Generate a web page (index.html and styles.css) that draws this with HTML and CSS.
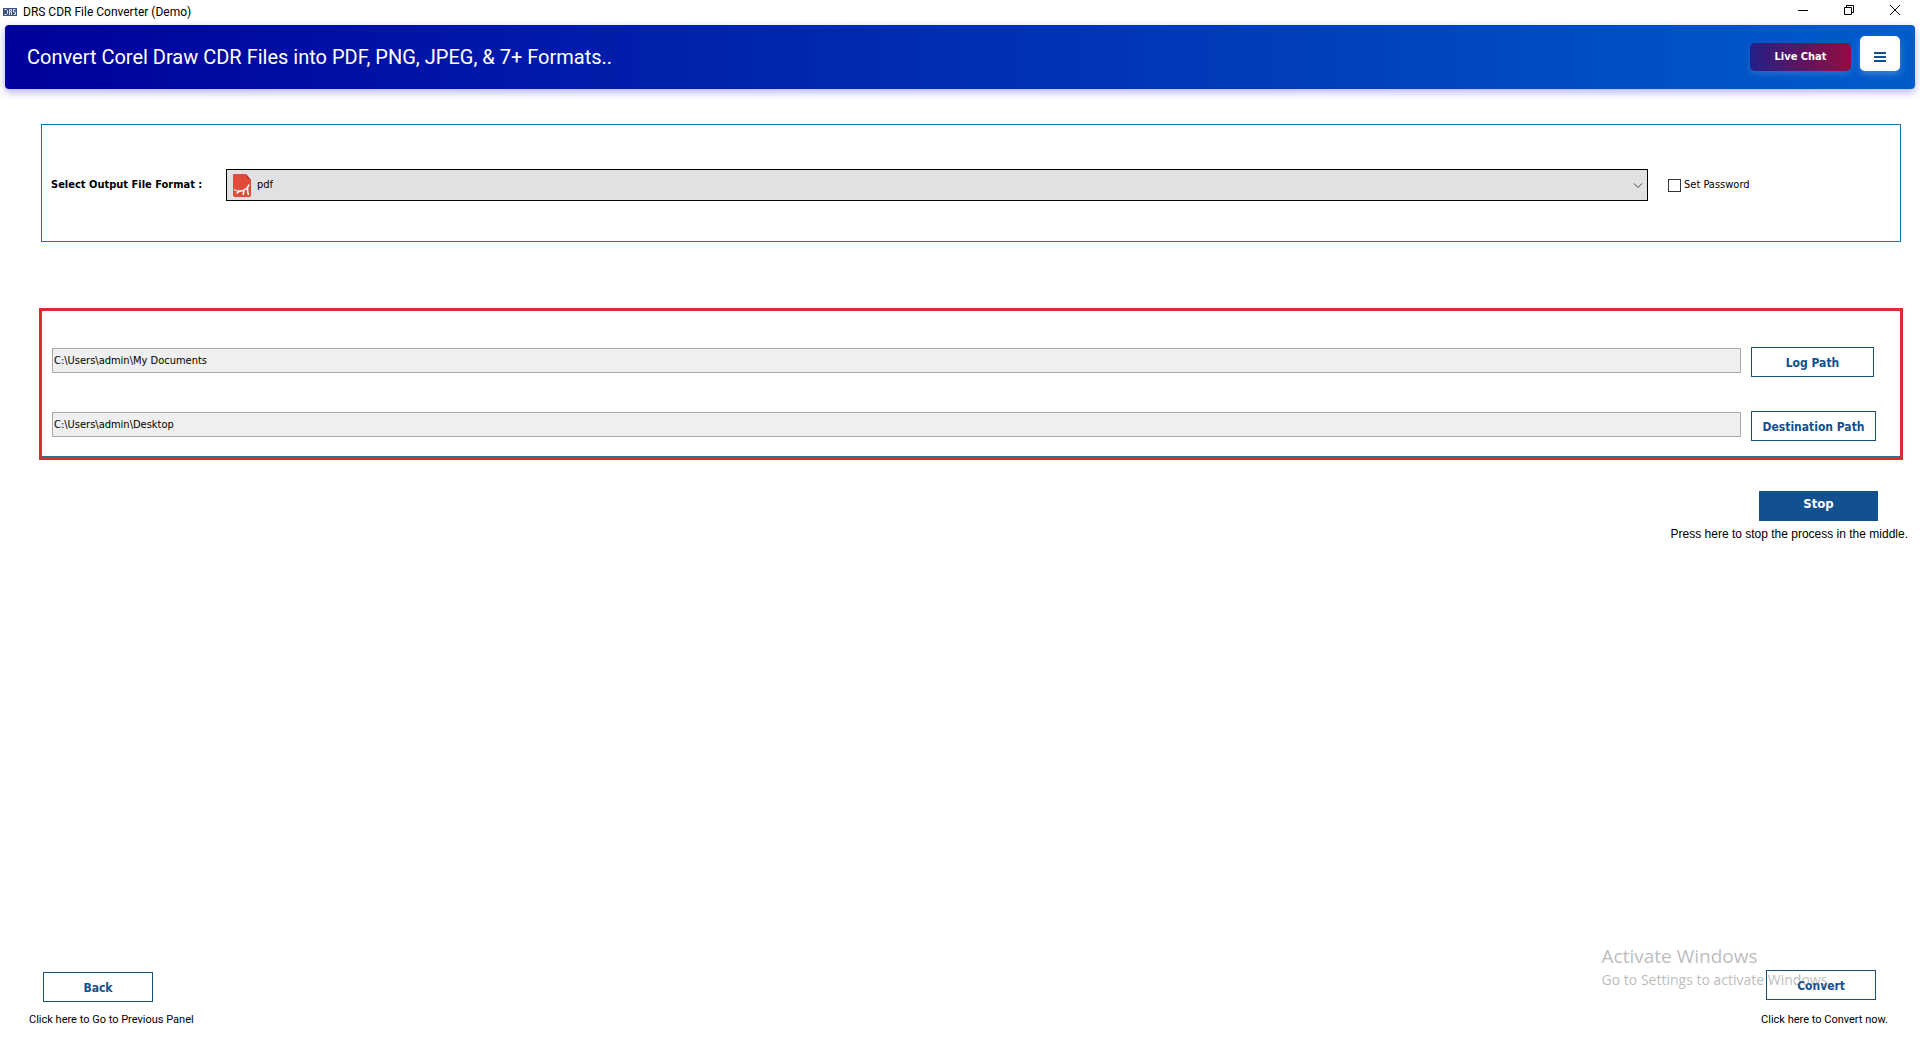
FILE: index.html
```html
<!DOCTYPE html>
<html lang="en">
<head>
<meta charset="utf-8">
<meta name="viewport" content="width=device-width, initial-scale=1">
<title>DRS CDR File Converter (Demo)</title>
<link rel="stylesheet" href="styles.css">
</head>
<body>
<div class="titlebar">
  <svg class="app-icon" width="14" height="8" viewBox="0 0 14 8" aria-hidden="true">
    <rect width="14" height="8" fill="#3f5083"/>
    <path d="M1.500 1.500h2l1 1v3l-1 1h-2M6.500 7v-5.500h2v2h-2M8.500 4v3M12.500 1.500h-2v2.500h2v2.500h-2" fill="none" stroke="#dfe4f2" stroke-width="1"/>
  </svg>
  <span class="app-name">DRS CDR File Converter (Demo)</span>
  <div class="window-controls">
    <button type="button" aria-label="Minimize"><svg width="10" height="10" viewBox="0 0 10 10"><path d="M0 5.500h10"/></svg></button>
    <button type="button" aria-label="Restore"><svg width="10" height="10" viewBox="0 0 10 10"><path d="M.5 2.500h7v7h-7zM2.500 2.500v-2h7v7h-2"/></svg></button>
    <button type="button" aria-label="Close"><svg width="10" height="10" viewBox="0 0 10 10"><path d="M0 0l10 10M10 0L0 10"/></svg></button>
  </div>
</div>

<header class="banner">
  <h1>Convert Corel Draw CDR Files into PDF, PNG, JPEG, &amp; 7+ Formats..</h1>
  <button class="chat" type="button">Live Chat</button>
  <button class="menu" type="button" aria-label="Menu"><svg width="12" height="10" viewBox="0 0 12 10"><path d="M0 0h12v2H0zM0 4h12v2H0zM0 8h12v2H0z" fill="#12508f"/></svg></button>
</header>

<main>
  <section class="format">
    <label class="format-label" for="format">Select Output File Format :</label>
    <div class="combo">
      <select id="format"><option>pdf</option></select>
      <svg class="pdf-icon" width="18" height="23" viewBox="0 0 18 23" aria-hidden="true">
        <path d="M1 0h12l5 6v15a2 2 0 0 1-2 2H2a2 2 0 0 1-2-2V1a1 1 0 0 1 1-1z" fill="#e24a3a"/>
        <path d="M13 0l5 6-4-2z" fill="#b03428"/>
        <path d="M1 15.500c3 2 6 2 9 1 3-1 5-3 6-6M3.500 19.500l4-3M11 17l-1 4M14.500 13.500c0 3 0 5 1 7.500" fill="none" stroke="#fff" stroke-width="1.500"/>
      </svg>
      <svg class="arrow" width="10" height="6" viewBox="0 0 10 6" aria-hidden="true"><path d="M1 .5l4 4 4-4" fill="none" stroke="#444"/></svg>
    </div>
    <label class="check"><input type="checkbox">Set Password</label>
  </section>

  <section class="paths">
    <input type="text" aria-label="Log path" value="C:\Users\admin\My Documents" readonly>
    <button class="outline log" type="button">Log Path</button>
    <input type="text" aria-label="Destination path" value="C:\Users\admin\Desktop" readonly>
    <button class="outline" type="button">Destination Path</button>
  </section>

  <div class="stop-area">
    <button class="stop" type="button">Stop</button>
    <p>Press here to stop the process in the middle.</p>
  </div>
</main>

<footer>
  <div class="step back">
    <button class="outline" type="button">Back</button>
    <p>Click here to Go to Previous Panel</p>
  </div>
  <div class="step convert">
    <button class="outline" type="button">Convert</button>
    <p>Click here to Convert now.</p>
    <div class="watermark">
      <p class="watermark-title">Activate Windows</p>
      <p>Go to Settings to activate Windows.</p>
    </div>
  </div>
</footer>
</body>
</html>
```
FILE: styles.css
```css
* { box-sizing: border-box; }

body {
  margin: 0;
  min-height: 100vh;
  display: flex;
  flex-direction: column;
  background: #fff;
  color: #000;
  font: 11px/16px "DejaVu Sans Condensed", "DejaVu Sans", sans-serif;
}

p, h1 { margin: 0; }

button, input, select { font: inherit; color: inherit; border-radius: 0; }

.titlebar {
  display: flex;
  align-items: center;
  height: 25px;
  padding: 0 2px 2px 3px;
  gap: 6px;
}

.app-name { font: 12px/16px Roboto, sans-serif; }

.window-controls {
  display: flex;
  margin-left: auto;
  padding-bottom: 3px;
}

.window-controls button {
  display: grid;
  place-items: center;
  width: 46px;
  height: 18px;
  padding: 0;
  border: 0;
  background: none;
}

.window-controls path { fill: none; stroke: #000; }

.banner {
  display: flex;
  align-items: center;
  height: 64px;
  margin: 0 5px;
  padding: 0 15px 0 22px;
  border-radius: 4px;
  background: linear-gradient(to right, #00009b, #005ccb);
  box-shadow: 0 3px 8px rgba(60, 50, 220, .4);
}

.banner h1 {
  margin-right: auto;
  color: #fff;
  font: 20px/24px Roboto, Arial, sans-serif;
}

.chat {
  width: 101px;
  height: 28px;
  margin-right: 9px;
  padding: 0;
  border: 0;
  border-radius: 5px;
  background: linear-gradient(to right, #241f86, #940c3e);
  box-shadow: 0 3px 6px rgba(255, 255, 255, .15);
  color: #fff;
  font-weight: bold;
}

.menu {
  display: grid;
  place-items: center;
  width: 40px;
  height: 35px;
  margin-bottom: 7px;
  padding: 6px 0 0;
  border: 0;
  border-radius: 5px;
  background: #fff;
  box-shadow: 0 3px 7px rgba(255, 255, 255, .25);
}

.format {
  display: grid;
  grid-template-columns: 155px 1fr 222px;
  column-gap: 20px;
  align-items: center;
  height: 118px;
  margin: 35px 19px 0 41px;
  padding: 4px 10px 0 9px;
  border: 1px solid #1a76b0;
}

.format-label { font-weight: bold; }

.combo { position: relative; }

.combo select {
  display: block;
  width: 100%;
  height: 32px;
  padding: 0 26px 0 30px;
  border: 1px solid #000;
  background: #e1e1e1;
  appearance: none;
}

.pdf-icon, .arrow { position: absolute; pointer-events: none; }
.pdf-icon { left: 7px; top: 5px; }
.arrow { right: 5px; top: 14px; }

.check { display: flex; align-items: center; gap: 3px; }

.check input {
  width: 13px;
  height: 13px;
  margin: 0;
  border: 1px solid #333;
  background: #fff;
  appearance: none;
}

.check input:checked { background: #12508f; }

.paths {
  display: grid;
  grid-template-columns: 1fr 125px;
  column-gap: 10px;
  row-gap: 34px;
  margin: 66px 17px 0 39px;
  padding: 36px 24px 16px 10px;
  border: 3px solid #de2a33;
  box-shadow: inset 0 -1px #2b719f;
}

.paths input {
  height: 25px;
  margin-top: 1px;
  padding: 0 1px;
  border: 1px solid #ababab;
  background: #efefef;
}

.outline {
  height: 30px;
  padding: 1px 0 0;
  border: 1px solid #15507f;
  background: #fff;
  color: #12508f;
  font-size: 12px;
  font-weight: bold;
}

.log { width: 123px; }

.stop-area {
  display: flex;
  flex-direction: column;
  align-items: flex-end;
  padding: 31px 12px 0;
  gap: 5px;
}

.stop {
  width: 119px;
  height: 30px;
  margin-right: 30px;
  padding: 0 0 4px;
  border: 0;
  background: #12508f;
  color: #fff;
  font-size: 13px;
  font-weight: bold;
}

.stop-area p { font: 12px/16px "Liberation Sans", Arial, sans-serif; }

footer {
  display: flex;
  justify-content: space-between;
  align-items: flex-end;
  margin-top: auto;
  padding: 0 32px 12px 29px;
  font-family: Roboto, sans-serif;
}

.step {
  position: relative;
  display: flex;
  flex-direction: column;
  gap: 10px;
}

.step .outline {
  width: 110px;
  font-family: "DejaVu Sans Condensed", "DejaVu Sans", sans-serif;
}

.back .outline { margin-left: 14px; }
.convert { gap: 12px; }
.convert .outline { margin-left: 5px; }

.watermark {
  position: absolute;
  right: 57px;
  top: -27px;
  color: rgba(120, 120, 120, .5);
  font: 14px/20px "Open Sans", sans-serif;
  white-space: nowrap;
  pointer-events: none;
}

.watermark-title { font-size: 19px; line-height: 27px; }
```
